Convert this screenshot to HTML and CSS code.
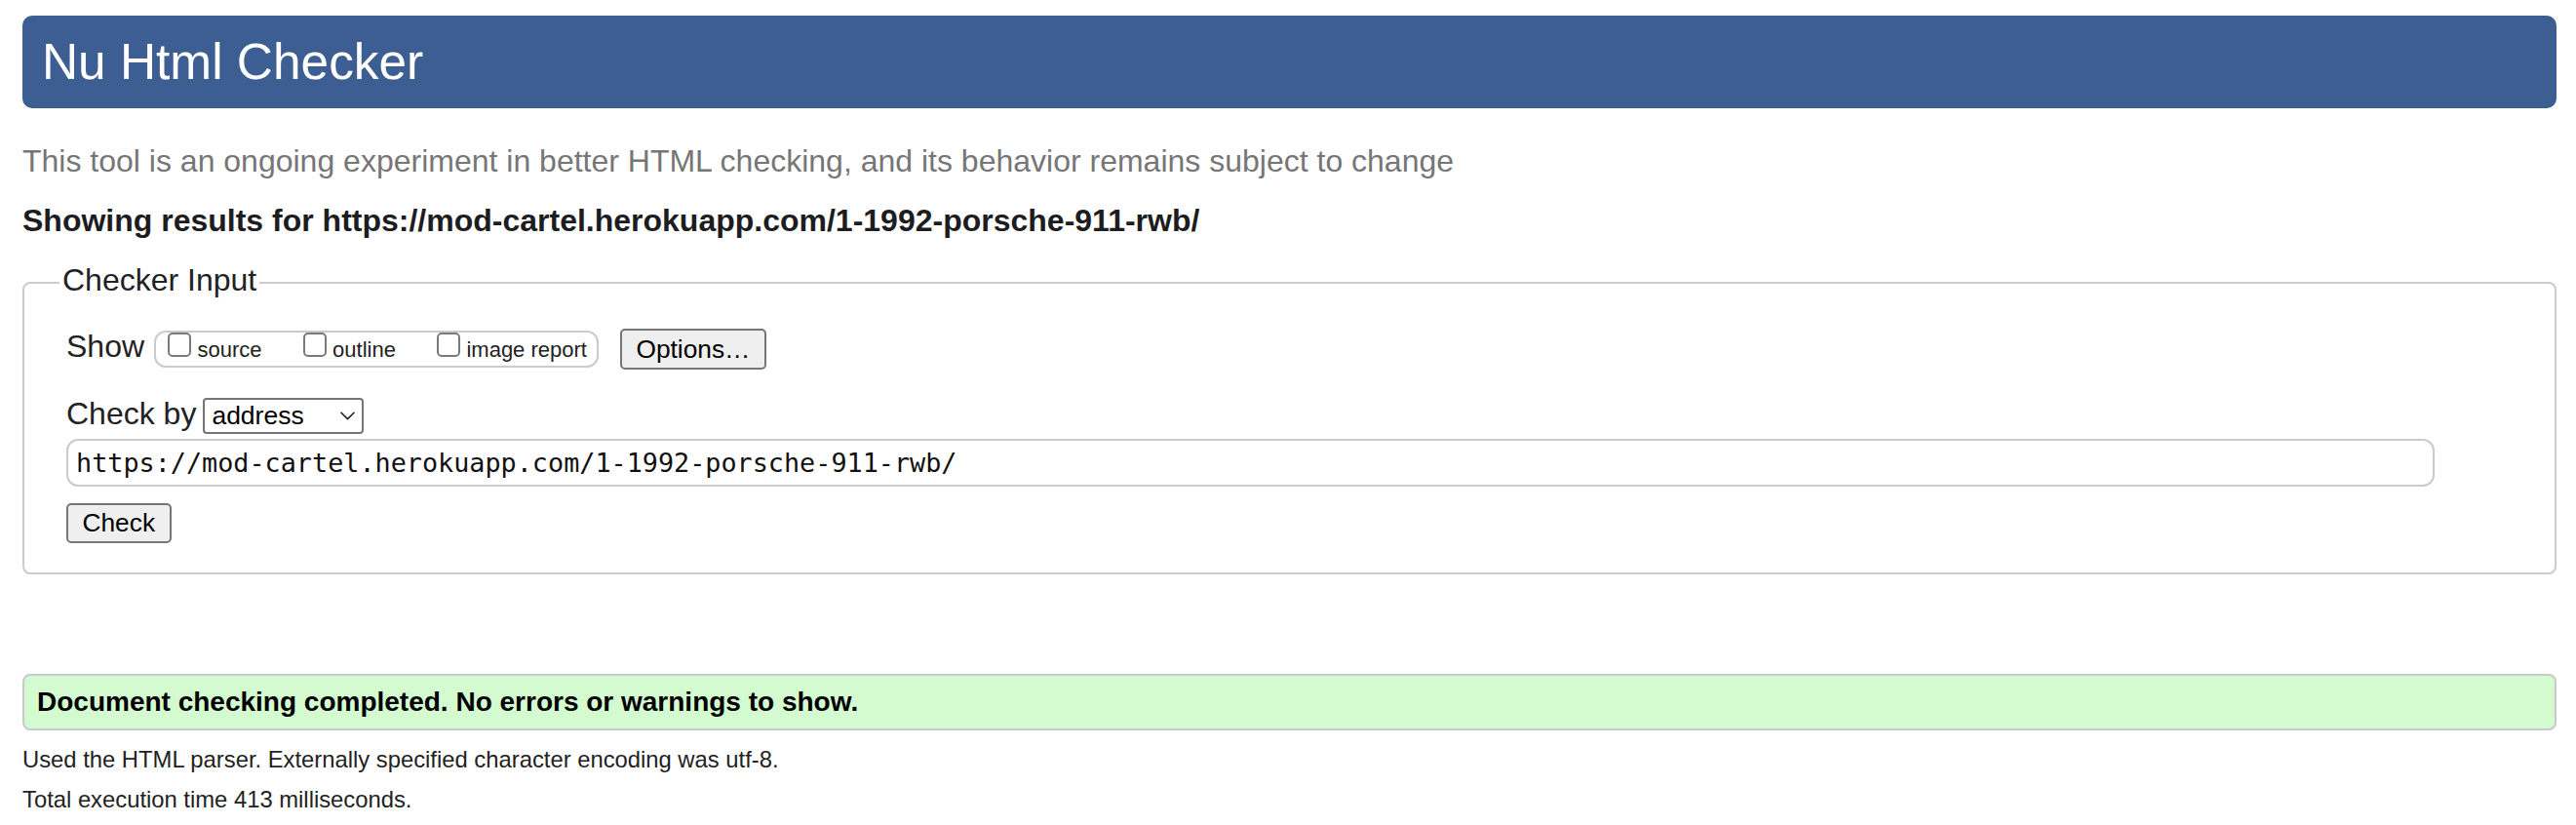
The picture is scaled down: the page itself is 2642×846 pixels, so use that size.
FILE: index.html
```html
<!DOCTYPE html>
<html lang="en">
<head>
<meta charset="utf-8">
<title>Showing results for https://mod-cartel.herokuapp.com/1-1992-porsche-911-rwb/ - Nu Html Checker</title>
<link rel="stylesheet" href="styles.css">
</head>
<body class="page">
<h1 class="banner">Nu Html Checker</h1>
<p class="intro">This tool is an ongoing experiment in better HTML checking, and its behavior remains subject to change</p>
<p class="results-for">Showing results for https://mod-cartel.herokuapp.com/1-1992-porsche-911-rwb/</p>
<form class="checker-form">
<fieldset class="checker">
<legend class="checker-legend">Checker Input</legend>
<div class="row row-show">
<span class="row-label row-label-show">Show</span>
<div class="show-box">
<label class="opt"><input type="checkbox" class="cb"><span class="opt-text">source</span></label>
<label class="opt"><input type="checkbox" class="cb"><span class="opt-text">outline</span></label>
<label class="opt"><input type="checkbox" class="cb"><span class="opt-text">image report</span></label>
</div>
<button type="button" class="btn btn-options">Options…</button>
</div>
<div class="row row-by">
<span class="row-label row-label-by">Check by</span>
<div class="select"><span class="select-text">address</span><svg class="chev" viewBox="0 0 15 9" width="15" height="9"><path d="M1 1.2 L7.5 7.6 L14 1.2" fill="none" stroke="#222" stroke-width="1.6" stroke-linecap="round" stroke-linejoin="round"/></svg></div>
</div>
<input class="url" type="url" value="https://mod-cartel.herokuapp.com/1-1992-porsche-911-rwb/">
<div class="row row-submit"><button type="button" class="btn btn-check">Check</button></div>
</fieldset>
</form>
<p class="success">Document checking completed. No errors or warnings to show.</p>
<p class="details details-first">Used the HTML parser. Externally specified character encoding was utf-8.</p>
<p class="details details-last">Total execution time 413 milliseconds.</p>
</body>
</html>
```

FILE: styles.css
```css
html {
  background: #fff;
}

.page {
  margin: 0;
  padding: 16px 20px 0 23px;
  font-family: "Liberation Sans", Arial, Helvetica, sans-serif;
  color: #222;
}

.banner {
  margin: 0;
  height: 95px;
  line-height: 95px;
  padding: 0 20px;
  background: #3d5e92;
  color: #fff;
  font-size: 51.4px;
  font-weight: normal;
  border-radius: 10px;
}

.intro {
  margin: 35.8px 0 0;
  font-size: 32px;
  line-height: 36px;
  color: #767676;
}

.results-for {
  margin: 25px 0 0;
  font-size: 32px;
  line-height: 36px;
  font-weight: bold;
  color: #1d1d1f;
}

.checker-form {
  margin: 25.2px 0 0;
}

.checker {
  margin: 0;
  min-width: 0;
  border: 2px solid #cbcbcb;
  border-radius: 8px;
  padding: 26px 123px 29.6px 43px;
}

.checker-legend {
  margin-left: -7px;
  padding: 0 3px 6px;
  font-size: 32px;
  line-height: 36px;
}

.row {
  display: flex;
  align-items: center;
}

.row-show {
  height: 42px;
}

.row-label {
  font-size: 32px;
  line-height: 36px;
  margin-bottom: 5px;
}

.row-label-show {
  margin-right: 10px;
}

.row-label-by {
  margin-right: 7px;
}

.show-box {
  display: flex;
  align-items: flex-start;
  box-sizing: border-box;
  height: 38px;
  border: 2px solid #cbcbcb;
  border-radius: 12px;
  padding: 0 10px 0 12px;
  margin-right: 22px;
}

.opt {
  display: flex;
  align-items: flex-end;
  margin-right: 42px;
}

.opt:last-child {
  margin-right: 0;
}

.cb {
  -webkit-appearance: none;
  appearance: none;
  margin: 0;
  width: 24px;
  height: 25px;
  box-sizing: border-box;
  border: 2px solid #7a7a7a;
  border-radius: 5px;
  background: #fff;
}

.opt-text {
  font-size: 22px;
  line-height: 14px;
  margin-left: 6.5px;
  color: #222;
}

.btn {
  font-family: inherit;
  color: #000;
  background: #efefef;
  border: 2px solid #767676;
  border-radius: 5px;
  padding: 0 14.5px;
  margin: 0;
  font-size: 26.3px;
  box-sizing: border-box;
}

.btn-options {
  height: 42px;
  line-height: 38px;
}

.btn-check {
  height: 41px;
  line-height: 37px;
}

.row-by {
  margin-top: 29px;
  height: 37px;
}

.select {
  display: flex;
  align-items: center;
  justify-content: space-between;
  box-sizing: border-box;
  width: 165px;
  height: 37px;
  border: 2px solid #767676;
  border-radius: 4px;
  padding: 0 7px;
  background: #fff;
  font-size: 26.5px;
  color: #000;
}

.chev {
  display: block;
  width: 15px;
  height: 9px;
}

.url {
  display: block;
  box-sizing: border-box;
  width: 100%;
  height: 48.6px;
  margin: 5.4px 0 0;
  border: 2px solid #cbcbcb;
  border-radius: 12px;
  padding: 0 8px;
  font-family: "DejaVu Sans Mono", "Liberation Mono", monospace;
  font-size: 26.8px;
  color: #111;
  background: #fff;
  outline: none;
}

.row-submit {
  margin-top: 17.4px;
}

.success {
  margin: 101.7px 0 0;
  box-sizing: border-box;
  height: 58.3px;
  line-height: 54.3px;
  border: 2px solid #c9c9c9;
  border-radius: 8px;
  background: #d4fad0;
  padding: 0 13px;
  font-weight: bold;
  font-size: 28px;
  color: #000;
}

.details {
  margin: 0;
  font-size: 23.8px;
  line-height: 32.7px;
  color: #222;
}

.details-first {
  margin-top: 14px;
}

.details-last {
  margin-top: 8.3px;
}
```
